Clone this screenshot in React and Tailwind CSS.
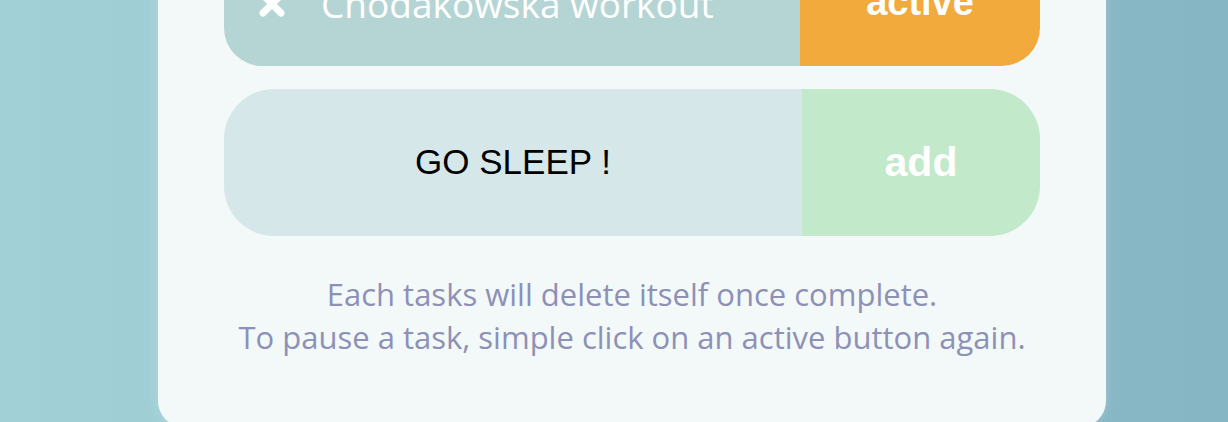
import React from 'react';

const XIcon = () => (
  <svg width="30" height="30" viewBox="0 0 30 30" className="shrink-0">
    <path d="M6 6 L24 24 M24 6 L6 24" stroke="#ffffff" strokeWidth="7" strokeLinecap="round" />
  </svg>
);

export default function App() {
  return (
    <div className="h-[422px] w-[1228px] overflow-hidden bg-[linear-gradient(90deg,#a1d0d7_0%,#9fcfd5_12%,#96c5cf_60%,#87b6c4_92%,#86b5c4_100%)]">
      <div className="ml-[158px] mt-[-104px] w-[948px] rounded-[26px] bg-[#f3f9f9] pt-[40px] pb-[68px] shadow-[0_0_12px_rgba(255,255,255,0.2)]">
        {/* running task */}
        <div className="mx-[66px] flex h-[130px] overflow-hidden rounded-[38px]">
          <div className="flex w-[576px] items-center gap-[34px] bg-[#b5d5d4] pl-[33px] pt-[5px]">
            <XIcon />
            <span className="font-['Open_Sans',sans-serif] text-[37px] text-white">Chodakowska workout</span>
          </div>
          <div className="flex flex-1 items-center justify-center bg-[#f2aa3c] pt-[3px] font-['Liberation_Sans',Arial,sans-serif] text-[38px] font-bold text-white">
            active
          </div>
        </div>

        {/* new task */}
        <div className="mx-[66px] mt-[23px] flex h-[147px] overflow-hidden rounded-[50px]">
          <div className="flex w-[578px] items-center justify-center bg-[#d5e7e9] font-['Liberation_Sans',Arial,sans-serif] text-[35px] text-black">
            GO SLEEP !
          </div>
          <div className="flex flex-1 items-center justify-center bg-[#c3e9cb] font-['Liberation_Sans',Arial,sans-serif] text-[41px] font-bold text-white">
            add
          </div>
        </div>

        <div className="mt-[37px] text-center font-['Open_Sans',sans-serif] text-[31px] leading-[43px] text-[#8e90b6]">
          <p>Each tasks will delete itself once complete.</p>
          <p>To pause a task, simple click on an active button again.</p>
        </div>
      </div>
    </div>
  );
}
